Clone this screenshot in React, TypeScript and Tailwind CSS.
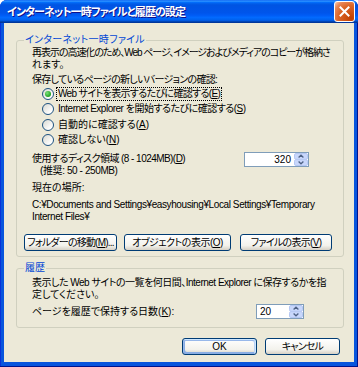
import React from "react";

const U = ({ c }: { c: string }) => <span className="underline underline-offset-[1px]">{c}</span>;

function Radio({ label, checked, focus, className }: { label: React.ReactNode; checked?: boolean; focus?: boolean; className?: string }) {
  return (
    <div className="flex h-[15.5px] items-center">
      <span className="flex h-[12px] w-[12px] items-center justify-center rounded-full border border-[#1c5180] bg-[linear-gradient(135deg,#d8d8d0,#ffffff_80%)]">
        {checked && <span className="h-[6px] w-[6px] rounded-full bg-[radial-gradient(circle_at_35%_35%,#7be07b,#21a121_70%)]" />}
      </span>
      <span
        className={
          "ml-[2px] whitespace-nowrap border px-[1px] leading-[12px] " +
          (focus ? "border-dotted border-black " : "border-transparent ") +
          (className ?? "")
        }
      >
        {label}
      </span>
    </div>
  );
}

function Arrows() {
  return (
    <svg width="14" height="13" viewBox="0 0 14 13" className="shrink-0">
      <rect x="0.5" y="0.5" width="13" height="5.8" rx="1.5" fill="#c8d7fb" stroke="#b4c7f3" />
      <rect x="0.5" y="6.7" width="13" height="5.8" rx="1.5" fill="#c8d7fb" stroke="#b4c7f3" />
      <path d="M4.6 4.4 L7 2.2 L9.4 4.4" stroke="#4d6185" strokeWidth="1.3" fill="none" />
      <path d="M4.6 8.6 L7 10.8 L9.4 8.6" stroke="#4d6185" strokeWidth="1.3" fill="none" />
    </svg>
  );
}

function Btn({ children, className, def }: { children: React.ReactNode; className: string; def?: boolean }) {
  return (
    <button
      className={
        "flex h-[17px] items-center justify-center whitespace-nowrap rounded-[3px] border border-[#003c74] bg-[linear-gradient(180deg,#ffffff,#f3f2ec_70%,#d6d0c5)] leading-none text-black " +
        (def
          ? "shadow-[inset_-1px_1px_#cee7ff,inset_1px_2px_#98b8ea,inset_-2px_2px_#bcd4f6,inset_1px_-1px_#89ade4,inset_2px_-2px_#89ade4] "
          : "") +
        className
      }
    >
      {children}
    </button>
  );
}

export default function App() {
  return (
    <div className="h-[367px] w-[358px] bg-white font-['Liberation_Sans','Noto_Sans_CJK_JP',sans-serif] text-[10px] leading-[12px] text-black [font-feature-settings:'palt']">
      <div className="flex h-full flex-col rounded-t-[7px] bg-[#0855dd] shadow-[inset_-1px_-1px_#00138c,inset_1px_0_#0831d9]">
        {/* title bar */}
        <div className="flex h-[23px] shrink-0 items-center justify-between rounded-t-[7px] bg-[linear-gradient(180deg,#0058ee_0%,#3593ff_4%,#288eff_6%,#127dff_8%,#036ffc_10%,#0262ee_14%,#0057e5_20%,#0054e3_24%,#0055eb_56%,#005bf5_66%,#026afe_76%,#0062ef_86%,#0052d6_92%,#0040ab_94%,#003092_100%)] pl-[7px] pr-[3px]">
          <span className="whitespace-nowrap text-[11px] font-bold tracking-[-0.9px] text-white [text-shadow:1px_1px_#0f1089]">
            インターネット一時ファイルと履歴の設定
          </span>
          <div className="flex h-[21px] w-[21px] items-center justify-center rounded-[3px] border border-white bg-[radial-gradient(circle_at_85%_85%,#c14000_0%,#dc6527_55%,#e8885a_80%,#ffccb2_100%)]">
            <svg width="11" height="11" viewBox="0 0 11 11">
              <path d="M1.5 1.5 L9.5 9.5 M9.5 1.5 L1.5 9.5" stroke="#fff" strokeWidth="2" strokeLinecap="square" />
            </svg>
          </div>
        </div>

        {/* body */}
        <div className="mx-[4px] mb-[5px] flex flex-1 flex-col bg-[#ece9d8] pl-[12px] pr-[10px]">
          <fieldset className="mt-[11px] rounded-[3px] border border-[#d0d0bf] px-[7px] pb-[5px]">
            <legend className="px-[1px] tracking-[0.3px] text-[#0046d5]">インターネット一時ファイル</legend>
            <div className="pl-[8px]">
              <p className="mt-[1px] whitespace-nowrap">
                <span className="tracking-[-1.05px]">再表示の高速化のため、Web ページ、イメージおよびメディアのコピーが格納さ</span>
                <br />
                れます。
              </p>
              <p className="mt-[3px] whitespace-nowrap tracking-[-0.7px]">保存しているページの新しいバージョンの確認:</p>
              <div className="pl-[10px]">
                <Radio checked focus className="tracking-[-0.65px]" label={<>Web サイトを表示するたびに確認する(<U c="E" />)</>} />
                <Radio className="tracking-[-0.5px]" label={<>Internet Explorer を開始するたびに確認する(<U c="S" />)</>} />
                <Radio label={<>自動的に確認する(<U c="A" />)</>} />
                <Radio label={<>確認しない(<U c="N" />)</>} />
              </div>
              <div className="mt-[5px] flex items-start">
                <p className="whitespace-nowrap">
                  <span className="tracking-[-0.55px]">使用するディスク領域 (8 - 1024MB)(<U c="D" />)</span>
                  <br />
                  <span className="pl-[8px] tracking-[-0.4px]">(推奨: 50 - 250MB)</span>
                </p>
                <div className="ml-auto mr-[27px] mt-[-1px] flex h-[15px] w-[65px] items-center border border-[#7f9db9] bg-white">
                  <span className="flex-1 pr-[3px] text-right">320</span>
                  <Arrows />
                </div>
              </div>
              <p className="mt-[5px]">現在の場所:</p>
              <p className="mt-[5px] whitespace-nowrap tracking-[-0.4px]">
                C:¥Documents and Settings¥easyhousing¥Local Settings¥Temporary
                <br />
                Internet Files¥
              </p>
            </div>
            <div className="mt-[11px] flex">
              <Btn className="w-[93px] tracking-[-0.8px]">フォルダーの移動(<U c="M" />)...</Btn>
              <Btn className="ml-[7px] w-[107px] tracking-[-0.5px]">オブジェクトの表示(<U c="O" />)</Btn>
              <Btn className="ml-[9px] w-[92px] tracking-[-0.7px]">ファイルの表示(<U c="V" />)</Btn>
            </div>
          </fieldset>

          <fieldset className="mt-[5px] rounded-[3px] border border-[#d0d0bf] px-[7px] pb-[8px]">
            <legend className="px-[1px] text-[#0046d5]">履歴</legend>
            <div className="pl-[8px]">
              <p className="mt-[3px] whitespace-nowrap">
                <span className="tracking-[-0.5px]">表示した Web サイトの一覧を何日間、Internet Explorer に保存するかを指</span>
                <br />
                定してください。
              </p>
              <div className="mt-[3px] flex h-[15px] items-center">
                <span className="whitespace-nowrap">ページを履歴で保持する日数(<U c="K" />):</span>
                <div className="ml-auto mr-[32px] flex h-[15px] w-[48px] items-center border border-[#7f9db9] bg-white">
                  <span className="flex-1 pl-[3px]">20</span>
                  <Arrows />
                </div>
              </div>
            </div>
          </fieldset>

          <div className="mr-[4px] mt-[10px] flex justify-end gap-[8px]">
            <Btn def className="w-[75px]">OK</Btn>
            <Btn className="w-[75px] tracking-[-0.8px]">キャンセル</Btn>
          </div>
        </div>
      </div>
    </div>
  );
}
